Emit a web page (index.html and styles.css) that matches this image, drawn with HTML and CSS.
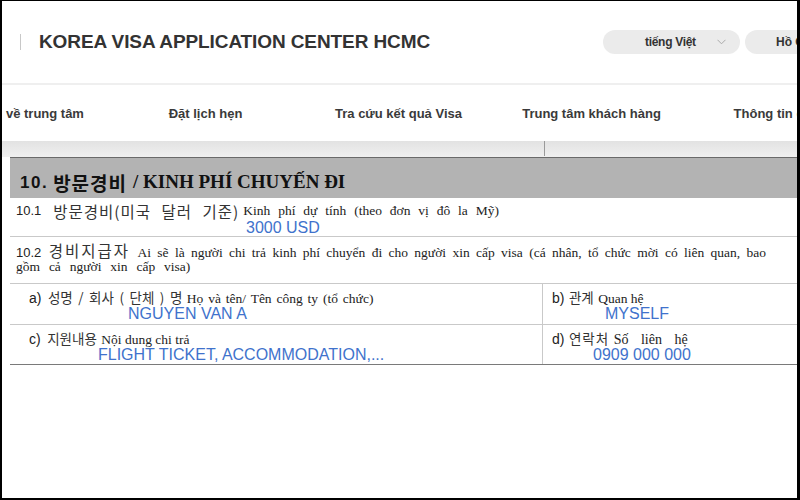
FILE: index.html
```html
<!DOCTYPE html>
<html lang="vi">
<head>
<meta charset="utf-8">
<title>Korea Visa Application Center HCMC</title>
<link rel="stylesheet" href="styles.css">
</head>
<body>
<div class="page">
  <header class="top">
    <div class="brand">
      <span class="bar"></span>
      <span class="title">KOREA VISA APPLICATION CENTER HCMC</span>
    </div>
    <div class="pill pill-lang">
      <span class="pill-text">tiếng Việt</span>
      <svg class="chev" width="9" height="6" viewBox="0 0 9 6"><path d="M0.5 0.8 L4.5 4.8 L8.5 0.8" fill="none" stroke="#aaa" stroke-width="1"/></svg>
    </div>
    <div class="pill pill-city">
      <span class="pill-text">Hồ Chí Minh</span>
    </div>
  </header>
  <nav class="nav">
    <a class="nav-item">Giới thiệu về trung tâm</a>
    <a class="nav-item">Đặt lịch hẹn</a>
    <a class="nav-item">Tra cứu kết quả Visa</a>
    <a class="nav-item">Trung tâm khách hàng</a>
    <a class="nav-item">Thông tin chung</a>
  </nav>
  <div class="strip"><span class="strip-line"></span></div>
  <section class="form">
    <div class="sec-head">
      <span class="sh-num">10.</span><span class="sh-ko">방문경비</span><span class="sh-vi">/ KINH PHÍ CHUYẾN ĐI</span>
    </div>
    <div class="row r101">
      <div class="line l1"><span class="num">10.1</span><span class="ko ko-lg">방문경비(미국 달러 기준)</span><span class="vi vi-wide">Kinh phí dự tính (theo đơn vị đô la Mỹ)</span></div>
      <div class="line l2 val v101">3000 USD</div>
    </div>
    <div class="row r102">
      <div class="line just"><span class="num">10.2</span> <span class="ko ko-md">경비지급자</span> <span class="vi">Ai sẽ là người chi trả kinh phí chuyển đi cho người xin cấp visa (cá nhân, tổ chức mời có liên quan, bao</span></div>
      <div class="line"><span class="vi vi-l2">gồm cả người xin cấp visa)</span></div>
    </div>
    <div class="row split">
      <div class="cell left">
        <div class="line"><span class="lab">a)</span> <span class="ko">성명<span class="fw">/</span>회사<span class="fw">(</span>단체<span class="fw">)</span>명</span> <span class="vi vi-a">Họ và tên/ Tên công ty (tổ chức)</span></div>
        <div class="line val va">NGUYEN VAN A</div>
      </div>
      <div class="cell right">
        <div class="line"><span class="lab">b)</span> <span class="ko">관계</span> <span class="vi">Quan hệ</span></div>
        <div class="line val vb">MYSELF</div>
      </div>
    </div>
    <div class="row split last">
      <div class="cell left">
        <div class="line"><span class="lab">c)</span> <span class="ko">지원내용</span> <span class="vi">Nội dung chi trả</span></div>
        <div class="line val vc">FLIGHT TICKET, ACCOMMODATION,...</div>
      </div>
      <div class="cell right">
        <div class="line"><span class="lab">d)</span> <span class="ko ko-d">연락처</span> <span class="vi vi-d">Số liên hệ</span></div>
        <div class="line val vd">0909 000 000</div>
      </div>
    </div>
  </section>
</div>
</body>
</html>
```
FILE: styles.css
```css
html, body {
  margin: 0;
  padding: 0;
}
body {
  width: 800px;
  height: 500px;
  box-sizing: border-box;
  border-style: solid;
  border-color: #000;
  border-width: 1px 3px 2px 2px;
  overflow: hidden;
  background: #fff;
  font-family: "Liberation Sans", Arial, sans-serif;
  color: #222;
}
.page {
  width: 795px;
  overflow: hidden;
}
.top {
  height: 82px;
  display: flex;
  align-items: center;
}
.brand {
  width: 601px;
  flex-shrink: 0;
  display: flex;
  align-items: center;
  padding-left: 18px;
  box-sizing: border-box;
}
.bar {
  width: 1px;
  height: 16px;
  background: #c8c8c8;
  margin-right: 18px;
}
.title {
  font-size: 19px;
  font-weight: bold;
  letter-spacing: -0.1px;
  color: #333;
  white-space: nowrap;
}
.pill {
  flex-shrink: 0;
  height: 24px;
  border-radius: 12px;
  background: #ebebeb;
  display: flex;
  align-items: center;
  box-sizing: border-box;
  font-size: 12px;
  color: #333;
  white-space: nowrap;
}
.pill-lang {
  width: 137px;
  padding-left: 42px;
}
.pill-lang .pill-text {
  width: 72px;
  font-weight: bold;
  letter-spacing: -0.3px;
}
.chev {
  display: block;
}
.pill-city {
  width: 120px;
  margin-left: 5px;
  padding-left: 31px;
  font-weight: bold;
}
.nav {
  height: 56px;
  border-top: 2px solid #efefef;
  display: flex;
  align-items: center;
  margin-left: -86px;
}
.nav-item {
  flex: 0 0 193px;
  text-align: center;
  font-size: 13px;
  font-weight: bold;
  color: #3a3a3a;
  white-space: nowrap;
}
.strip {
  height: 16px;
  background: linear-gradient(#e2e2e2, #f0f0f0);
  display: flex;
}
.strip-line {
  width: 1px;
  height: 15px;
  background: #9a9a9a;
  margin-left: 542px;
}
.form {
  margin-left: 8px;
}
.sec-head {
  height: 41px;
  box-sizing: border-box;
  border-top: 1px solid #6a6a6a;
  background: #b3b3b3;
  display: flex;
  align-items: flex-end;
  padding: 0 0 5px 10px;
  color: #111;
  font-weight: bold;
  font-size: 17px;
  white-space: nowrap;
}
.sh-num {
  font-family: "Liberation Sans", Arial, sans-serif;
  letter-spacing: 1.5px;
  margin-right: 5px;
}
.sh-ko {
  font-family: "Noto Sans CJK KR", sans-serif;
  font-size: 19px;
  letter-spacing: 1px;
  line-height: 21px;
  margin-right: 6px;
}
.sh-vi {
  font-family: "Liberation Serif", "Times New Roman", serif;
  font-size: 19px;
}
.row {
  border-bottom: 1px solid #c9c9c9;
  box-sizing: border-box;
}
.line {
  white-space: nowrap;
}
.num {
  font-size: 13px;
  color: #222;
}
.ko {
  font-family: "Noto Sans CJK KR", sans-serif;
  font-size: 13.5px;
  color: #333;
}
.fw {
  padding: 0 5.5px;
}
.ko-lg {
  font-size: 15.5px;
  letter-spacing: 1px;
  word-spacing: 6px;
}
.ko-md {
  font-size: 15.5px;
  letter-spacing: 2px;
}
.ko-d {
  letter-spacing: 1px;
}
.vi {
  font-family: "Liberation Serif", "Times New Roman", serif;
  font-size: 13.5px;
  color: #222;
}
.vi-wide {
  word-spacing: 4.5px;
}
.vi-l2 {
  word-spacing: 5.5px;
}
.vi-a {
  word-spacing: 1.5px;
}
.vi-d {
  word-spacing: 9px;
  font-size: 14px;
}
.val {
  font-family: "Liberation Sans", Arial, sans-serif;
  font-size: 16px;
  color: #4072cc;
}
.r101 {
  height: 39px;
  padding: 4px 0 0 6px;
}
.r101 .l1 {
  height: 18px;
  line-height: 18px;
  display: flex;
  align-items: center;
}
.r101 .num {
  margin-right: 12px;
}
.r101 .ko {
  margin-right: 4px;
}
.r101 .l2 {
  line-height: 15px;
}
.v101 {
  padding-left: 230px;
}
.r102 {
  height: 47px;
  padding: 5px 31px 0 6px;
}
.r102 .line {
  line-height: 16px;
  height: 16px;
}
.just {
  text-align: justify;
  text-align-last: justify;
  white-space: normal;
}
.split {
  display: grid;
  grid-template-columns: 533px 1fr;
  height: 41px;
}
.cell {
  padding-top: 5px;
}
.cell .line {
  line-height: 16px;
  height: 16px;
}
.cell .val {
  margin-top: 1px;
}
.left {
  border-right: 1px solid #c9c9c9;
  padding-left: 19px;
}
.right {
  padding-left: 9px;
}
.lab {
  font-family: "Liberation Sans", Arial, sans-serif;
  font-size: 14px;
  color: #222;
  margin-right: 2px;
}
.right .lab {
  margin-right: 0;
}
.va {
  padding-left: 99px;
}
.vb {
  padding-left: 53px;
}
.vc {
  padding-left: 69px;
}
.vd {
  padding-left: 41px;
}
.last {
  border-bottom: 1px solid #7a7a7a;
  height: 40px;
}
```
